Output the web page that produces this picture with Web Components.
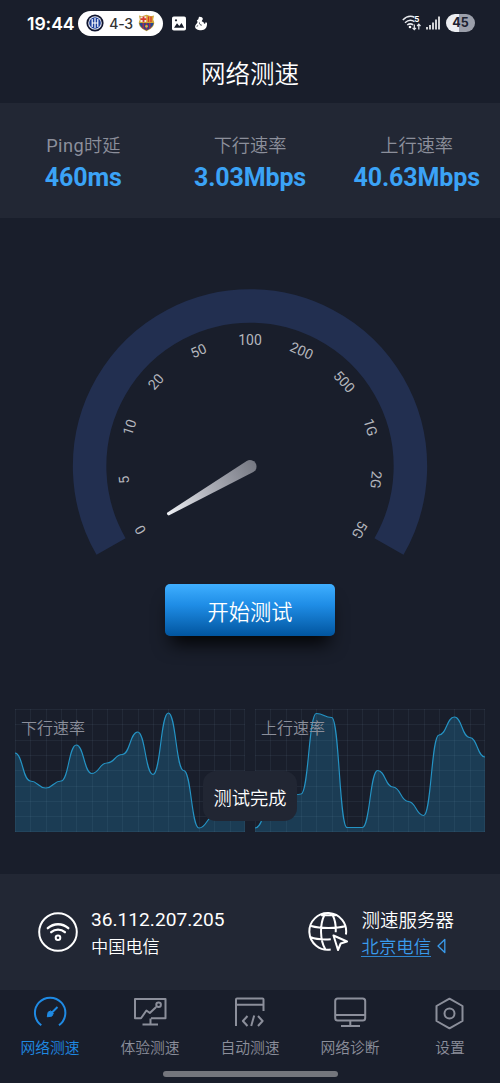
<!DOCTYPE html>
<html lang="zh-CN">
<head>
<meta charset="utf-8">
<title>网络测速</title>
<style>
html,body{margin:0;background:#191e2b}
body{font-family:Roboto,"Noto Sans CJK SC",sans-serif;font-weight:350;color:#fff;width:500px;height:1083px;overflow:hidden}
</style>
</head>
<body>
<speed-app></speed-app>
<script>
const define = (name, html, setup) => customElements.define(name, class extends HTMLElement {
  connectedCallback() {
    if (this.shadowRoot) return;
    const t = document.createElement('template');
    t.innerHTML = html;
    this.attachShadow({mode: 'open'}).append(t.content.cloneNode(true));
    if (setup) setup(this, this.shadowRoot);
  }
});

define('status-bar', `
<style>
:host{display:flex;align-items:center;height:46px;padding:0 25px 0 27px;box-sizing:border-box;font-family:Inter,sans-serif}
.time{font-size:17.700px;font-weight:600;width:48px;margin-right:3px;letter-spacing:-.1px;white-space:nowrap}
.pill{display:flex;align-items:center;justify-content:space-between;box-sizing:border-box;width:85px;height:25px;border-radius:13px;background:#fff;color:#333;padding:0 8px 0 8px;font-size:14px;font-weight:500}
.pill span{letter-spacing:-.3px}
.gap{flex:1}
svg{display:block}
.pic{margin-left:9px}.fig{margin-left:9px}.sig{margin:0 6px 0 4px}
.bat{width:29px;height:18px;border-radius:9px;background:linear-gradient(90deg,#eceef2 45%,#9b9faa 45%);color:#1c2230;font-size:12.500px;font-weight:700;line-height:18px;text-align:center}
</style>
<span class="time">19:44</span>
<span class="pill">
<svg width="18" height="18" viewBox="0 0 18 18"><circle cx="9" cy="9" r="8.600" fill="#10152f"/><circle cx="9" cy="9" r="6.800" fill="#e9edf7"/><circle cx="9" cy="9" r="5.800" fill="#1c3f9c"/><path d="M6.200 5v8M9 4v10M11.800 5v8M6.200 9h5.600" stroke="#fff" stroke-width="1.200"/></svg>
<span>4-3</span>
<svg width="17" height="18" viewBox="0 0 17 18"><path d="M1 1.500l3 .7L8.500 .8l4.500 1.400 3-.7-.8 4 1 3c0 4-3 6.500-7.700 8.700C3.800 15 .8 12.500.8 8.500l1-3z" fill="#caa437"/><path d="M2.500 2.800l6-.6V8h-6z" fill="#f0e8e0"/><path d="M5.500 2.500V8M2.500 5.200h6" stroke="#d83b32" stroke-width="1.800"/><path d="M8.500 2.200l6 .6V8h-6z" fill="#e6a62e"/><path d="M10.500 2.500V8M13 2.600V8" stroke="#cf3c35" stroke-width="1.300"/><path d="M1.300 9h14.400c-.7 3.600-3.300 5.600-7.200 7.400C4.700 14.700 2 12.800 1.300 9z" fill="#24478f"/><path d="M5.300 9v5.500M8.500 9v7M11.700 9v5.500" stroke="#a52c4d" stroke-width="1.600"/><circle cx="8.500" cy="12.300" r="1.400" fill="#d8b13c"/></svg>
</span>
<svg class="pic" width="14" height="15" viewBox="0 0 14 15"><rect y=".5" width="14" height="14" rx="1.800" fill="#fff"/><path d="M2 11.800l3-4.500 2.300 2.700L9.500 7l2.700 4.800z" fill="#191e2b"/><circle cx="4" cy="4.300" r="1.100" fill="#191e2b"/></svg>
<svg class="fig" width="12" height="15" viewBox="0 0 12 15"><path d="M4 .8l2 .2c1.900.2 2.400 2.700 1 3.600l-.2.800c1.700.2 2.200 1.200 2.200 2.300l1.200-.2.600-1.500 1.200.9c.2 4.500-1.500 7.300-5.800 7.300C2.500 14.200 0 12.800.1 10.500.2 8.500 2 7.700 2.600 6L1.800 4.600 3.300 3.300z" fill="#fff"/><path d="M4.500 6.500c-.2 1.800.8 2.600 2.300 2.700M1.600 10.300l1.500-.6" stroke="#191e2b" stroke-width=".8" fill="none"/></svg>
<span class="gap"></span>
<svg width="20" height="16" viewBox="0 0 20 16"><g fill="none" stroke="#e8eaee" stroke-width="1.500"><path d="M.8 5C4.500 1.300 9 .7 12.500 2.300M3 7.700c3-2.700 6.500-3 9.500-1M5.200 10c1.800-1.300 4-1.500 6-.2"/><path d="M12.300 9.500v5M10.600 12.800l1.700 1.800 1.700-1.800M16.800 14.500V9.300M15.100 11l1.700-1.800 1.700 1.800" stroke-width="1.200"/></g><circle cx="8" cy="12" r="1.300" fill="#fff"/><text x="12.300" y="7" font-size="8" font-weight="700" fill="#fff">5</text></svg>
<svg class="sig" width="14" height="14" viewBox="0 0 14 14"><path d="M1 11v2.500M4 9v4.500M7 6.500v7M10 3.500v10M13 .5v13" stroke="#fff" stroke-width="1.600"/></svg>
<span class="bat">45</span>`);

define('page-title', `<style>:host{display:flex;justify-content:center;height:57px;line-height:57px;font-size:24.500px}</style><slot></slot>`);

define('metric-item', `
<style>
:host{display:flex;flex-direction:column;align-items:center;flex:1 1 0;min-width:0;padding-top:30px}
.l{font-size:18.200px;line-height:26px;color:#8c8f9b;white-space:nowrap}
.v{font-size:25px;letter-spacing:-.12px;line-height:30px;margin-top:4px;font-weight:700;color:#3ba3f6;white-space:nowrap}
</style><span class="l"><slot name="label"></slot></span><span class="v"><slot></slot></span>`);

define('metric-row', `<style>:host{display:flex;height:115px;box-sizing:border-box;background:#222734}</style><slot></slot>`);

define('speed-gauge', `
<style>:host{display:block;height:366px;font-weight:400}svg{display:block}text{font-size:14px;fill:#b4b6bd;text-anchor:middle}</style>
<svg width="500" height="366" viewBox="0 218 500 366">
<defs><linearGradient id="n" gradientUnits="userSpaceOnUse" x1="168" y1="514" x2="254" y2="464"><stop stop-color="#eef0f4"/><stop offset=".5" stop-color="#abadb6"/><stop offset="1" stop-color="#777a84"/></linearGradient></defs>
<path d="M111.050 546.500A160.400 160.400 0 1 1 388.950 546.500" fill="none" stroke="#222f50" stroke-width="33.500"/>
<path d="M167.100 512.700L246.700 460.900A6.500 6.500 0 1 1 253.300 472.100L168.700 515.500Q166.500 515 167.100 512.700z" fill="url(#n)"/>
<g id="ticks"></g>
</svg>`, (el, root) => {
  const g = root.getElementById('ticks');
  ['0','5','10','20','50','100','200','500','1G','2G','5G'].forEach((s, i) => {
    const t = document.createElementNS('http://www.w3.org/2000/svg', 'text');
    t.setAttribute('transform', `rotate(${-120 + i * 24} 250 466.500)`);
    t.setAttribute('x', 250);
    t.setAttribute('y', 344.7);
    t.textContent = s;
    g.append(t);
  });
});

define('start-button', `
<style>
:host{display:flex;justify-content:center;height:125px}
button{width:170px;height:52px;border:0;border-radius:5px;padding:5px 0 0;font:350 21.200px/47px Roboto,"Noto Sans CJK SC",sans-serif;color:#fff;background:linear-gradient(#3fafff,#1f8de6 40%,#01559f);box-shadow:0 14px 18px -6px #000d}
</style><button><slot></slot></button>`);

define('speed-chart', `
<style>
:host{display:block;position:relative;width:230px;height:123px}
svg{display:block;overflow:visible}
span{position:absolute;left:6px;top:8px;font-size:16px;line-height:24px;color:#8c8f9b}
</style>
<svg width="231" height="123" viewBox="0 0 231 123"><path id="area" fill="#1b3c54"/><path id="grid" fill="none" stroke="#8fb0c8" stroke-opacity=".08"/><path id="line" fill="none" stroke="#2493c4" stroke-width="1.150"/></svg>
<span><slot></slot></span>`, (el, root) => {
  const y = el.getAttribute('points').split(' ').map(Number), s = 230 / 15;
  let d = `M0 ${y[0]}`;
  for (let i = 1; i < y.length; i++) d += `C${(i - .5) * s} ${y[i-1]} ${(i - .5) * s} ${y[i]} ${i * s} ${y[i]}`;
  root.getElementById('line').setAttribute('d', d);
  root.getElementById('area').setAttribute('d', d + 'V123H0Z');
  let g = '';
  for (let i = 0; i <= 15; i++) g += `M${Math.min(Math.round(i * s), 229) + .5} 0V123`;
  for (let i = 0; i <= 8; i++) g += `M0 ${Math.min(Math.round(i * s), 122) + .5}H230`;
  root.getElementById('grid').setAttribute('d', g);
});

define('toast-tip', `<style>:host{display:block;position:absolute;left:203px;top:62px;width:94px;height:50px;border-radius:13px;background:#212633;text-align:center;font-size:18.300px;line-height:56px;white-space:nowrap}</style><slot></slot>`);

define('chart-pair', `<style>:host{display:flex;gap:10px;position:relative;height:165px;padding:0 15px}</style><slot></slot>`);

define('info-bar', `<style>:host{display:flex;height:116px;background:#222734;box-sizing:border-box;padding-left:38px}</style><slot></slot>`);

define('info-item', `
<style>
:host{display:flex;align-items:flex-start}
.i{width:40px;height:40px;margin:38px 13px 0 0}
.t{padding-top:32px;white-space:nowrap}
.a{font-size:var(--title-size,19.150px);line-height:var(--title-line,27px);height:27px}
.b{font-size:17.200px;line-height:26px;margin-top:1px}
</style>
<div class="i"><slot name="icon"></slot></div>
<div class="t"><div class="a"><slot name="title"></slot></div><div class="b"><slot></slot></div></div>`);

define('link-text', `
<style>:host{display:inline-flex;align-items:center;color:#3a9ced}u{text-decoration:none;height:23px;line-height:27px;border-bottom:1px solid #2f86cf;box-sizing:border-box;font-size:17.400px}svg{margin-left:6px}</style>
<u><slot></slot></u><svg width="9" height="16" viewBox="0 0 9 16"><path d="M7.800 1.500L1 8l6.800 6.500z" fill="none" stroke="#3a9ced" stroke-width="1.300" stroke-linejoin="round"/></svg>`);

const ICONS = {
  wifi: [40, '<circle cx="20" cy="20" r="18.800"/><path d="M9.800 16.200c6-5.300 14.500-5.300 20.500 0M13.200 20.200c4-3.500 9.700-3.500 13.700 0" stroke-width="2.300" stroke-linecap="round"/><circle cx="20" cy="25.800" r="2.300" stroke-width="2"/>'],
  globe: [40, '<path d="M37.900 22.500A18.400 18.400 0 1 0 22.700 37.600M3.200 14c9 2.700 25.500 2.700 34.500 0M2.800 25.300c5 2 12 2.500 20 2M13.100 3.200h14.800M16.300 3.200c-4.500 9-4.500 25 1 34M24.700 3.200c2.600 5 3.300 11 3 17"/><path d="M25.500 23.500l13.500 6-6.300 2-2.700 6.500z"/>'],
  speed: [36, '<path d="M9.300 31.200A15.200 15.200 0 1 1 27 31.200"/><path d="M18 20.500l7.500-7.500"/><path d="M15.300 22.800l.8-4.600 2.600-1.300 2.600 2.400-1.400 2.800z" fill="currentColor" stroke-width="1"/>'],
  board: [36, '<path d="M19 24.300H33.500V5H3v19.300h6l5.400-7.800 3.400 2.500 6.400-6"/><circle cx="26.600" cy="10.700" r="2.300"/><path d="M10.500 30.500h15.500M18.500 24.500V30"/>'],
  code: [36, '<path d="M4 32V5.500Q4 4.500 5 4.500H30.500Q31.500 4.500 31.500 5.500V17M4 10.700H31.500"/><path d="M15.500 22l-4.600 5 4.600 5M26 22l4.600 5-4.600 5M22.200 21.500l-3 10.500"/>'],
  screen: [36, '<rect x="3.200" y="4.500" width="30" height="22" rx="2.500"/><path d="M3.500 21H33M18.300 26.500v5M9 32h19"/>'],
  gear: [36, '<path d="M17.500 4.700L30.500 12v15L17.500 34.300 4.500 27v-15z"/><circle cx="17.500" cy="19.500" r="5"/>']
};

define('line-icon', '<style>:host{display:block}svg{display:block}</style>', (el, root) => {
  const [n, d] = ICONS[el.getAttribute('name')];
  root.innerHTML += `<svg width="${n}" height="${n}" viewBox="0 0 ${n} ${n}" fill="none" stroke="currentColor" stroke-width="2" stroke-linejoin="round">${d}</svg>`;
});

define('tab-item', `
<style>:host{display:flex;flex-direction:column;align-items:center;flex:1 1 0;padding-top:4px;color:#8c8f9b}:host([active]){color:#1f8ae3}.l{font-size:14.800px;line-height:22px;margin-top:7px;white-space:nowrap}</style>
<div class="icon"></div><span class="l"><slot></slot></span>`, (el, root) => {
  const icon = document.createElement('line-icon');
  icon.setAttribute('name', el.getAttribute('icon'));
  root.querySelector('.icon').append(icon);
});

define('tab-bar', `
<style>:host{display:flex;flex-direction:column;align-items:center;height:93px}nav{display:flex;width:500px;height:81px}.h{width:175px;height:6px;border-radius:3px;background:#74767d}</style>
<nav><slot></slot></nav><div class="h"></div>`);

define('speed-app', `
<style>:host{display:flex;flex-direction:column;width:500px;height:1083px}.ip{font-weight:400}.ping{font-weight:400;letter-spacing:.4px}.second{margin-left:84px;--title-size:18.500px;--title-line:30px}</style>
<status-bar></status-bar>
<page-title>网络测速</page-title>
<metric-row>
<metric-item><span slot="label"><span class="ping">Ping</span>时延</span>460ms</metric-item>
<metric-item><span slot="label">下行速率</span>3.03Mbps</metric-item>
<metric-item><span slot="label">上行速率</span>40.63Mbps</metric-item>
</metric-row>
<speed-gauge></speed-gauge>
<start-button>开始测试</start-button>
<chart-pair>
<speed-chart points="44 72 79 72 36 64.500 54 45.500 23 65.500 4 61.500 119 107 92 80">下行速率</speed-chart>
<speed-chart points="119 99 90 85 4.500 8.500 118.500 118.500 61.500 78 92.500 106.500 26 8 28.500 48">上行速率</speed-chart>
<toast-tip>测试完成</toast-tip>
</chart-pair>
<info-bar>
<info-item><line-icon slot="icon" name="wifi"></line-icon><span slot="title" class="ip">36.112.207.205</span>中国电信</info-item>
<info-item class="second"><line-icon slot="icon" name="globe"></line-icon><span slot="title">测速服务器</span><link-text>北京电信</link-text></info-item>
</info-bar>
<tab-bar>
<tab-item active icon="speed">网络测速</tab-item>
<tab-item icon="board">体验测速</tab-item>
<tab-item icon="code">自动测速</tab-item>
<tab-item icon="screen">网络诊断</tab-item>
<tab-item icon="gear">设置</tab-item>
</tab-bar>`);
</script>
</body>
</html>
